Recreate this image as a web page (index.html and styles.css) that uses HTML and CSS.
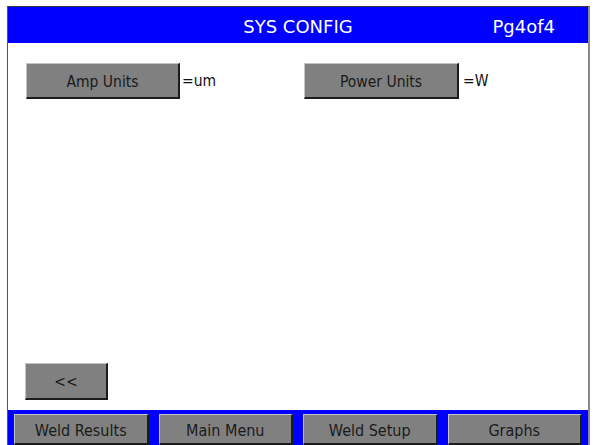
FILE: index.html
```html
<!DOCTYPE html>
<html lang="en">
<head>
    <meta charset="UTF-8">
    <meta name="viewport" content="width=device-width, initial-scale=1.0">
    <title>SYS CONFIG</title>
    <link rel="stylesheet" href="styles.css">
</head>
<body>
    <div class="screen">
        <div class="header">
            <span></span>
            <span class="title">SYS CONFIG</span>
            <span class="page">Pg4of4</span>
        </div>
        <div class="content">
            <div class="fields">
                <div class="field field-amp">
                    <button class="btn btn-wide" type="button">Amp Units</button>
                    <span class="value">=um</span>
                </div>
                <div class="field field-power">
                    <button class="btn btn-wide" type="button">Power Units</button>
                    <span class="value value-power">=W</span>
                </div>
            </div>
            <button class="btn btn-back" type="button">&lt;&lt;</button>
        </div>
        <div class="footer">
            <button class="btn btn-nav" type="button">Weld Results</button>
            <button class="btn btn-nav" type="button">Main Menu</button>
            <button class="btn btn-nav" type="button">Weld Setup</button>
            <button class="btn btn-nav" type="button">Graphs</button>
        </div>
    </div>
</body>
</html>
```

FILE: styles.css
```css
body {
    font-family: "DejaVu Sans", Verdana, sans-serif;
    margin: 0;
    padding: 0;
    background-color: #fff;
    overflow: hidden;
}

.screen {
    margin: 6px 0 0 7px;
    width: 580px;
    height: 460px;
    border-top: 1px solid #3a3a3a;
    border-left: 1px solid #555;
    border-right: 2px solid #8a8a8a;
    display: flex;
    flex-direction: column;
}

.header {
    height: 36px;
    background-color: #0000ff;
    color: #fff;
    display: grid;
    grid-template-columns: 1fr auto 1fr;
    align-items: center;
    font-size: 18px;
    padding-top: 3px;
    box-sizing: border-box;
}

.header .page {
    justify-self: end;
    padding-right: 33px;
}

.content {
    height: 367px;
    display: flex;
    flex-direction: column;
    justify-content: space-between;
    padding: 20px 0 10px 17px;
    box-sizing: border-box;
}

.fields {
    display: flex;
    padding-left: 1px;
}

.field {
    display: flex;
    align-items: center;
    gap: 2px;
    width: 278px;
    font-family: "DejaVu Sans Condensed", "DejaVu Sans", sans-serif;
    font-size: 15.5px;
    color: #111;
    padding-bottom: 2px;
}

.value-power {
    margin-left: 2px;
}

.btn {
    font-family: "DejaVu Sans Condensed", "DejaVu Sans", sans-serif;
    font-size: 15.5px;
    color: #1a1a1a;
    background-color: #808080;
    border-style: solid;
    border-width: 1px 2px 2px 1px;
    border-color: #c4c4c4 #1c1c1c #1c1c1c #c4c4c4;
    padding: 2px 0 0;
    margin: 0;
    box-sizing: border-box;
}

.btn-wide {
    width: 154px;
    height: 36px;
}

.field-power .btn-wide {
    width: 155px;
}

.btn-back {
    width: 83px;
    height: 37px;
    align-self: flex-start;
}

.footer {
    background-color: #0000ff;
    display: grid;
    grid-template-columns: repeat(4, 1fr);
    gap: 10px;
    padding: 4px 6px 20px;
}

.btn-nav {
    height: 31px;
    font-size: 16px;
}
```
